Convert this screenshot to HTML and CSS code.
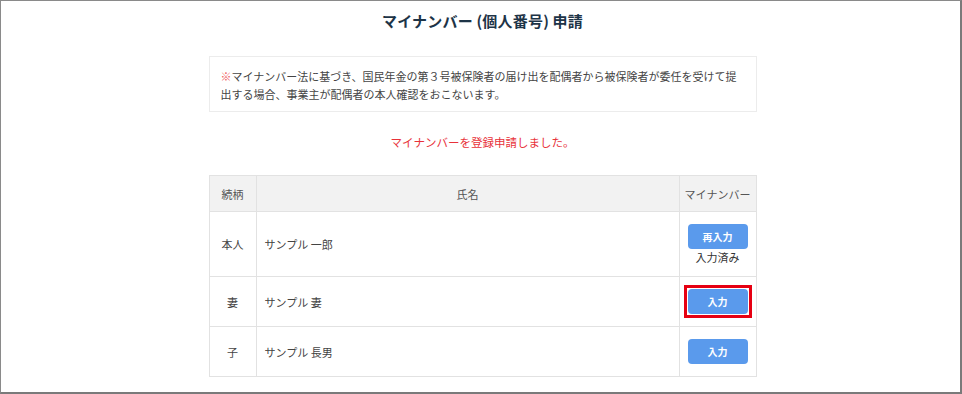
FILE: index.html
```html
<!DOCTYPE html>
<html lang="ja">
<head>
<meta charset="utf-8">
<link rel="stylesheet" href="styles.css">
</head>
<body>
<div class="frame">
  <div class="content">
    <h1 class="title">マイナンバー (個人番号) 申請</h1>
    <div class="note"><span class="mark">※</span>マイナンバー法に基づき、国民年金の第３号被保険者の届け出を配偶者から被保険者が委任を受けて提出する場合、事業主が配偶者の本人確認をおこないます。</div>
    <p class="message">マイナンバーを登録申請しました。</p>
    <table class="list">
      <thead>
        <tr><th class="c-rel">続柄</th><th class="c-name">氏名</th><th class="c-num">マイナンバー</th></tr>
      </thead>
      <tbody>
        <tr class="r-tall">
          <td class="c-rel">本人</td>
          <td class="c-name">サンプル 一郎</td>
          <td class="c-num"><button class="btn">再入力</button><div class="done">入力済み</div></td>
        </tr>
        <tr>
          <td class="c-rel">妻</td>
          <td class="c-name">サンプル 妻</td>
          <td class="c-num"><span class="highlight"><button class="btn">入力</button></span></td>
        </tr>
        <tr>
          <td class="c-rel">子</td>
          <td class="c-name">サンプル 長男</td>
          <td class="c-num"><button class="btn">入力</button></td>
        </tr>
      </tbody>
    </table>
  </div>
</div>
</body>
</html>
```

FILE: styles.css
```css
html, body {
  margin: 0;
  padding: 0;
  background: #ffffff;
}
body {
  font-family: "Noto Sans CJK JP", "Noto Sans", sans-serif;
  color: #333333;
}
.frame {
  width: 962px;
  height: 394px;
  box-sizing: border-box;
  border-top: 1px solid #8a8a8a;
  border-left: 1px solid #8a8a8a;
  border-right: 2px solid #7a7a7a;
  border-bottom: 2px solid #7a7a7a;
  overflow: hidden;
}
.content {
  width: 548px;
  margin: 0 auto;
  padding-left: 4px;
}
.title {
  margin: 0;
  padding-top: 8px;
  height: 55px;
  box-sizing: border-box;
  text-align: center;
  font-size: 15px;
  line-height: 24px;
  font-weight: 700;
  color: #1d3447;
  letter-spacing: 0.2px;
}
.note {
  border: 1px solid #ececec;
  padding: 10px 11px;
  font-size: 11px;
  line-height: 18px;
  color: #444444;
  height: 56px;
  box-sizing: border-box;
}
.mark {
  color: #f06060;
}
.message {
  margin: 21px 0 0;
  text-align: center;
  font-size: 11.5px;
  line-height: 18px;
  color: #e8323a;
}
.list {
  margin-top: 24px;
  width: 548px;
  border-collapse: collapse;
  font-size: 11px;
  color: #444444;
}
.list th, .list td {
  border: 1px solid #e2e2e2;
  padding: 0;
  font-weight: 400;
}
.list th {
  background: #f2f2f2;
  height: 35px;
  color: #555555;
}
.list td {
  height: 49px;
}
.list .r-tall td {
  height: 64px;
}
.c-rel {
  width: 46px;
  text-align: center;
}
.c-name {
  text-align: center;
}
td.c-name {
  text-align: left;
  padding-left: 8px !important;
}
.c-num {
  width: 76px;
  text-align: center;
}
.btn {
  display: inline-block;
  width: 60px;
  height: 25px;
  border: none;
  border-radius: 4px;
  background: #5a9aec;
  color: #ffffff;
  font-family: "Noto Sans CJK JP", sans-serif;
  font-size: 10px;
  font-weight: 700;
  padding: 0;
  vertical-align: middle;
}
.done {
  font-size: 11px;
  line-height: 14px;
  color: #333333;
  margin-top: 1px;
}
.highlight {
  display: inline-block;
  border: 3px solid #e60012;
  padding: 1px;
  line-height: 0;
}
```
